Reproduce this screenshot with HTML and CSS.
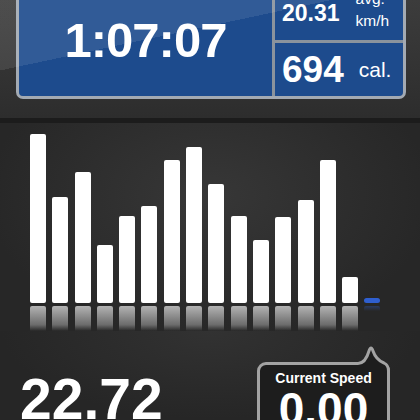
FILE: index.html
```html
<!DOCTYPE html>
<html lang="en">

<head>
    <meta charset="UTF-8">
    <meta name="viewport" content="width=device-width, initial-scale=1.0">
    <title>Ride Tracker</title>
    <link rel="stylesheet" href="styles.css">
</head>

<body>

    <div class="screen">
        <header class="top">
            <div class="panel">
                <div class="cell time">1:07:07</div>
                <div class="side">
                    <div class="cell stat">
                        <span class="num num-small">20.31</span>
                        <span class="unit unit-two">avg.<br>km/h</span>
                    </div>
                    <div class="cell stat">
                        <span class="num">694</span>
                        <span class="unit">cal.</span>
                    </div>
                </div>
            </div>
        </header>

        <section class="chart">
            <div class="bars">
                <div class="col"><div class="bar" style="height: 169px"></div><div class="mirror"></div></div>
                <div class="col"><div class="bar" style="height: 106px"></div><div class="mirror"></div></div>
                <div class="col"><div class="bar" style="height: 131px"></div><div class="mirror"></div></div>
                <div class="col"><div class="bar" style="height: 58px"></div><div class="mirror"></div></div>
                <div class="col"><div class="bar" style="height: 87px"></div><div class="mirror"></div></div>
                <div class="col"><div class="bar" style="height: 97px"></div><div class="mirror"></div></div>
                <div class="col"><div class="bar" style="height: 143px"></div><div class="mirror"></div></div>
                <div class="col"><div class="bar" style="height: 156px"></div><div class="mirror"></div></div>
                <div class="col"><div class="bar" style="height: 119px"></div><div class="mirror"></div></div>
                <div class="col"><div class="bar" style="height: 87px"></div><div class="mirror"></div></div>
                <div class="col"><div class="bar" style="height: 63px"></div><div class="mirror"></div></div>
                <div class="col"><div class="bar" style="height: 86px"></div><div class="mirror"></div></div>
                <div class="col"><div class="bar" style="height: 103px"></div><div class="mirror"></div></div>
                <div class="col"><div class="bar" style="height: 143px"></div><div class="mirror"></div></div>
                <div class="col"><div class="bar" style="height: 26px"></div><div class="mirror"></div></div>
                <div class="col col-now"><div class="bar"></div><div class="mirror"></div></div>
            </div>
        </section>

        <section class="bottom">
            <div class="distance">22.72</div>
            <div class="bubble">
                <svg class="tail" width="34" height="26" viewBox="0 0 34 26">
                    <path d="M0 18.5 C5 18.3 9 13 11 6 Q13 0 15 6 C17 12 21 16 26 18 Q30.5 20 30.5 26 L0 26 Z" fill="#1d1d1d"/>
                    <path d="M0 18.5 C5 18.3 9 13 11 6 Q13 0 15 6 C17 12 21 16 26 18 Q30.5 20 30.5 26" fill="none" stroke="#a3a3a3" stroke-width="3"/>
                </svg>
                <p class="bubble-label">Current Speed</p>
                <p class="bubble-value">0.00</p>
            </div>
        </section>
    </div>

</body>

</html>
```

FILE: styles.css
```css
* {
    box-sizing: border-box;
    margin: 0;
    padding: 0;
}

body {
    width: 420px;
    height: 420px;
    overflow: hidden;
    background-color: #2a2a2a;
    font-family: 'Liberation Sans', Arial, sans-serif;
    color: white;
}

.screen {
    display: flex;
    flex-direction: column;
    height: 420px;
}

/* Top stats panel */
.top {
    position: relative;
    flex-shrink: 0;
    height: 123px;
    display: flex;
    flex-direction: column;
    justify-content: flex-end;
    padding: 0 14px 19px 16px;
    overflow: hidden;
    background: linear-gradient(#3c3c3c, #2d2d2d);
    border-bottom: 5px solid #1c1c1c;
}

.top::after {
    content: '';
    position: absolute;
    inset: 0;
    background: linear-gradient(168deg, rgba(255, 255, 255, 0.09) 34%, rgba(255, 255, 255, 0) 34%);
    pointer-events: none;
}

.panel {
    flex-shrink: 0;
    width: 390px;
    height: 115px;
    display: grid;
    grid-template-columns: 253px 1fr;
    gap: 3px;
    background-color: #8a939d;
    border: 3px solid #a3aab3;
    border-radius: 7px;
    overflow: hidden;
}

.cell {
    background-color: #1d4b8d;
}

.time {
    display: flex;
    justify-content: center;
    align-items: center;
    padding-bottom: 3px;
    font-size: 49px;
    font-weight: bold;
    letter-spacing: -1px;
}

.side {
    display: grid;
    grid-template-rows: 1fr 1fr;
    gap: 3px;
}

.stat {
    display: flex;
    align-items: center;
    padding-left: 7px;
}

.num {
    font-size: 37px;
    font-weight: bold;
}

.num-small {
    font-size: 23px;
}

.unit {
    margin-left: 15px;
    font-size: 21px;
}

.unit-two {
    margin-left: 16px;
    margin-bottom: 8px;
    font-size: 15.5px;
    line-height: 22px;
}

/* Speed chart */
.chart {
    flex-shrink: 0;
    height: 208px;
    padding-left: 30px;
    background: radial-gradient(ellipse at 50% 35%, #373737, #272727 75%);
}

.bars {
    display: flex;
    align-items: flex-end;
    gap: 6.3px;
    height: 208px;
}

.col {
    display: flex;
    flex-direction: column;
    width: 16px;
}

.bar {
    background-color: #ffffff;
    border-radius: 2px;
}

.mirror {
    height: 25px;
    margin-top: 3px;
    border-radius: 2px 2px 0 0;
    background: linear-gradient(#b3b3b3, #6c6c6c 75%, rgba(60, 60, 60, 0));
}

.col-now .bar {
    height: 5px;
    background-color: #2f5fd0;
    border-radius: 3px;
}

.col-now .mirror {
    background: linear-gradient(rgba(47, 95, 208, 0.35), rgba(47, 95, 208, 0) 20%);
}

/* Bottom readout */
.bottom {
    flex: 1;
    min-height: 0;
    overflow: hidden;
    display: flex;
    justify-content: space-between;
    align-items: flex-start;
    padding: 0 30px 0 20px;
    background: radial-gradient(ellipse at 50% 0%, #323232, #262626 70%);
}

.distance {
    margin-top: 40px;
    font-size: 57px;
    line-height: 57px;
    font-weight: bold;
}

.bubble {
    position: relative;
    width: 133px;
    height: 80px;
    margin-top: 31px;
    padding-top: 5px;
    text-align: center;
    background-color: #1d1d1d;
    border: 3px solid #a3a3a3;
    border-radius: 9px;
}

.tail {
    position: absolute;
    left: 98px;
    top: -20px;
    display: block;
}

.bubble-label {
    font-size: 14px;
    line-height: 16px;
    font-weight: bold;
}

.bubble-value {
    font-size: 46px;
    line-height: 46px;
    font-weight: bold;
}
```
